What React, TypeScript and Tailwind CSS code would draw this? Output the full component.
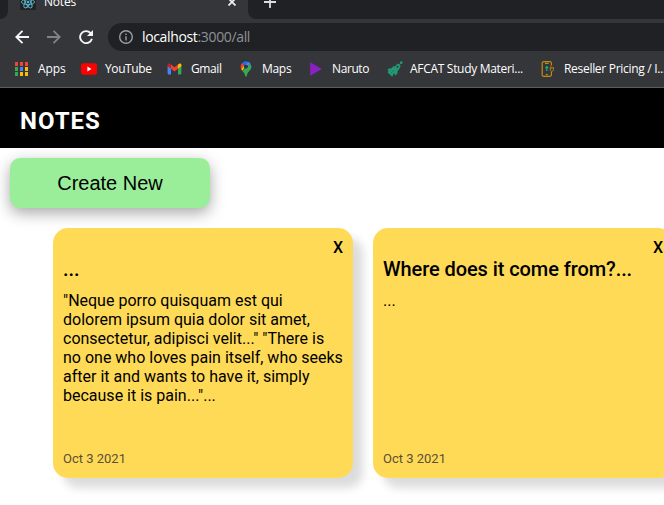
import React from "react";

const UI = "font-['Open_Sans','Noto_Sans',sans-serif]";

function ReactIcon() {
  return (
    <svg width="16" height="16" viewBox="0 0 16 16" fill="none" stroke="#5ab4cd" strokeWidth="0.9">
      <rect width="16" height="16" rx="1.5" fill="#222222" stroke="none" />
      <ellipse cx="8" cy="8" rx="6.6" ry="2.6" />
      <ellipse cx="8" cy="8" rx="6.6" ry="2.6" transform="rotate(60 8 8)" />
      <ellipse cx="8" cy="8" rx="6.6" ry="2.6" transform="rotate(120 8 8)" />
      <circle cx="8" cy="8" r="1.3" fill="#5ab4cd" stroke="none" />
    </svg>
  );
}

function AppsIcon() {
  const colors = ["#f04438", "#f04438", "#f04438", "#34a853", "#4285f4", "#fbbc05", "#34a853", "#fbbc05", "#fbbc05"];
  return (
    <svg width="14" height="14" viewBox="0 0 14 14" shapeRendering="crispEdges">
      {colors.map((c, i) => (
        <rect key={i} x={(i % 3) * 5} y={Math.floor(i / 3) * 5} width="3" height="4" fill={c} />
      ))}
    </svg>
  );
}

function YouTubeIcon() {
  return (
    <svg width="16" height="12" viewBox="0 0 16 12">
      <rect y="0.3" width="16" height="11.4" rx="2.8" fill="#ff0000" />
      <path d="M6.4 3.6v4.8L10.5 6z" fill="#fff" />
    </svg>
  );
}

function GmailIcon() {
  return (
    <svg width="15" height="12" viewBox="0 0 15 12">
      <path d="M0.6 2.5V10.6a.8.8 0 0 0 .8.8H4V4.7z" fill="#4285f4" />
      <path d="M14.4 2.5V10.6a.8.8 0 0 1-.8.8H11V4.7z" fill="#34a853" />
      <path d="M4 1.6 7.5 4.3 11 1.6v4.1L7.5 8.4 4 5.7z" fill="#ea4335" />
      <path d="M.6 2.1C.6.6 2.2.2 3.2 1L4 1.6v4.1L.6 3.2z" fill="#c5221f" />
      <path d="M14.4 2.1c0-1.5-1.6-1.9-2.6-1.1l-.8.6v4.1l3.4-2.5z" fill="#fbbc04" />
    </svg>
  );
}

function MapsIcon() {
  return (
    <svg width="16" height="16" viewBox="0 0 16 16">
      <path d="M8 .3a5.3 5.3 0 0 0-4.1 1.9L6.4 4.4 10 .7A5.3 5.3 0 0 0 8 .3z" fill="#1a73e8" />
      <path d="M3.9 2.2a5.3 5.3 0 0 0-.7 5.7l3.2-3.5z" fill="#ea4335" />
      <path d="M10 .7 6.4 4.5a2 2 0 0 1 3.2 2.3l2.9-4A5.3 5.3 0 0 0 10 .7z" fill="#4285f4" />
      <path d="m6.5 6.9-2.2 2.8A6.3 6.3 0 0 1 3.2 7.9L6 4.6a2 2 0 0 0 .5 2.3z" fill="#fbbc04" />
      <path d="M12.6 3a5.3 5.3 0 0 1 .1 5.2c-1.4 2.4-3.1 2.5-3.9 6.7-.3 1.1-1.3 1.1-1.6 0-.4-2.2-1.4-3.500-2.900-5.200z" fill="#34a853" />
      <circle cx="8" cy="5.6" r="1.9" fill="#35363a" />
    </svg>
  );
}

function PlayIcon() {
  return (
    <svg width="12" height="14" viewBox="0 0 12 14">
      <path d="M.2.2 11.8 7 .2 13.8z" fill="#8a20c4" />
    </svg>
  );
}

function RocketIcon() {
  return (
    <svg width="16" height="16" viewBox="0 0 16 16" fill="#219a72">
      <path d="M11.600 2.600 13.500 4.500c0 2-1.200 3.800-2.900 5.500L10.200 13 7.800 14.600 7.500 12.200 6.200 13 5.800 15.500 3.800 14.800 3 13.200 1.400 12.600.6 10.700 2 10 .400 9 1.700 7.400 4 7.600 6 5.500 8.100 5.300C9.200 4 10.300 3 11.600 2.600z" />
      <path d="m12.500 3.500 1.800-1.700" stroke="#219a72" strokeWidth="1" />
      <circle cx="14.300" cy="1.600" r="1.300" />
      <circle cx="10.500" cy="5.700" r="1" fill="#35363a" />
      <path d="M4 12 7 9" stroke="#237057" strokeWidth="0.800" />
    </svg>
  );
}

function PhoneIcon() {
  return (
    <svg width="14" height="16" viewBox="0 0 14 16" fill="none" stroke="#c18b15" strokeWidth="1.2">
      <path d="M11.400 4.500V2.200A1.500 1.500 0 0 0 9.900.7H3.700a1.500 1.500 0 0 0-1.500 1.500v11.600a1.500 1.500 0 0 0 1.500 1.500h6.200a1.500 1.500 0 0 0 1.500-1.500v-3" />
      <path d="M5 2.300h3.600M5.800 13.600h2" />
      <path d="M10.300 5.500v3.200c0 1 .6 1.600 1.500 1.600s1.600-.6 1.600-1.600V6M11.900 5.500v2.500" strokeWidth="0.9" />
      <path d="M6.800 10V6M5.500 7l1.300-1.300L8.100 7" stroke="#16b364" />
    </svg>
  );
}

const bookmarks = [
  { label: "Apps", icon: <AppsIcon />, box: "w-[67px]", iconBox: "w-[24px] pl-px", text: "tracking-[-0.1px]" },
  { label: "YouTube", icon: <YouTubeIcon />, box: "w-[86px]", iconBox: "w-[24px]", text: "tracking-[-0.4px]" },
  { label: "Gmail", icon: <GmailIcon />, box: "w-[71px]", iconBox: "w-[24px]", text: "tracking-[-0.4px]" },
  { label: "Maps", icon: <MapsIcon />, box: "w-[70px]", iconBox: "w-[24px]", text: "tracking-[-0.3px]" },
  { label: "Naruto", icon: <PlayIcon />, box: "w-[79px]", iconBox: "w-[24px] pl-[2px]", text: "tracking-[-0.4px]" },
  { label: "AFCAT Study Materi...", icon: <RocketIcon />, box: "w-[153px]", iconBox: "w-[23px]", text: "tracking-[-0.3px]" },
  { label: "Reseller Pricing / I...", icon: <PhoneIcon />, box: "w-[140px]", iconBox: "w-[24px]", text: "tracking-[-0.3px]" },
];

function Browser() {
  return (
    <div className={`h-[88px] border-b border-[#5b5c60] bg-[#35363a] font-medium text-white ${UI}`}>
      <div className="flex h-[19px]">
        <div className="w-2 rounded-br-lg bg-[#202124]" />
        <div className="flex h-[19px] w-[240px] overflow-hidden pl-3">
          <div className="-mt-[6px] w-6 shrink-0"><ReactIcon /></div>
          <span className="-mt-[7px] text-[12px] leading-[18px] tracking-[-0.2px]">Notes</span>
          <svg className="mr-[12px] ml-auto -mt-[2px]" width="8" height="8" viewBox="0 0 8 8" stroke="#f1f1f1" strokeWidth="1.7">
            <path d="m.5.5 7 7m0-7-7 7" />
          </svg>
        </div>
        <div className="flex-1 rounded-bl-lg bg-[#202124] pl-4">
          <svg className="-mt-[4px]" width="12" height="12" viewBox="0 0 12 12" stroke="#dcdde0" strokeWidth="1.8">
            <path d="M6 0v12M0 6h12" />
          </svg>
        </div>
      </div>
      <div className="flex h-9 items-center pl-[15px]">
        <svg className="mr-[18px]" width="14" height="14" viewBox="0 0 14 14" fill="none" stroke="#f5f5f6" strokeWidth="1.9">
          <path d="M14 7H1.5M7.5.8 1.3 7l6.200 6.200" />
        </svg>
        <svg className="mr-[18px]" width="14" height="14" viewBox="0 0 14 14" fill="none" stroke="#818286" strokeWidth="1.9">
          <path d="M0 7h12.5M6.5.8 12.7 7l-6.200 6.200" />
        </svg>
        <svg className="mr-[15px]" width="14" height="14" viewBox="0 0 14 14" fill="none" stroke="#f5f5f6" strokeWidth="1.9">
          <path d="M12.9 8.700A6 6 0 1 1 11.500 3l1 1.200" />
          <path d="M14 0v6H8z" fill="#f5f5f6" stroke="none" />
        </svg>
        <div className="flex h-7 flex-1 items-center rounded-l-full bg-[#202124] pl-[11px]">
          <svg className="mr-[9px] shrink-0" width="14" height="14" viewBox="0 0 14 14" fill="none" stroke="#9aa0a6" strokeWidth="1.4">
            <circle cx="7" cy="7" r="6.3" />
            <path d="M7 6.200v4.200M7 3.400v1.600" />
          </svg>
          <span className="text-[14px] leading-5 font-normal tracking-[-0.35px] text-[#8f9398]">
            <span className="text-white">localhost</span>:3000/all
          </span>
        </div>
      </div>
      <div className="flex h-7 items-center overflow-hidden pl-[14px]">
        {bookmarks.map((b) => (
          <div key={b.label} className={`flex shrink-0 items-center ${b.box}`}>
            <span className={`shrink-0 ${b.iconBox}`}>{b.icon}</span>
            <span className={`text-[12px] leading-4 whitespace-nowrap ${b.text}`}>{b.label}</span>
          </div>
        ))}
      </div>
    </div>
  );
}

function Note({ title, body }: { title: string; body: string }) {
  return (
    <article className="flex h-[250px] w-[300px] shrink-0 flex-col rounded-[15px] bg-[#ffda57] p-[10px] shadow-[10px_10px_10px_rgba(0,0,0,0.14)]">
      <button className="h-[19px] self-end text-[16px] leading-[19px] font-medium">X</button>
      <h2 className="h-6 text-[20px] leading-6 font-medium tracking-[-0.08px]">{title}</h2>
      <p className="mt-[10px] text-[16px] leading-[19px]">{body}</p>
      <time className="mt-auto mb-[2px] text-[13px] leading-[15px] text-[#5a4f34]">Oct 3 2021</time>
    </article>
  );
}

export default function App() {
  return (
    <div className="h-[505px] w-[664px] overflow-hidden bg-white font-['Roboto',sans-serif] text-black">
      <Browser />
      <header className="flex h-[60px] items-center bg-black pl-5">
        <h1 className="pt-[6px] text-[24px] leading-7 font-bold tracking-[1px] text-white">NOTES</h1>
      </header>
      <main>
        <button className="mt-[10px] ml-[10px] block h-[50px] w-[200px] rounded-[10px] bg-[#9aee9a] font-['Liberation_Sans',Arial,sans-serif] text-[20px] shadow-[0_5px_15px_rgba(0,0,0,0.35)]">
          Create New
        </button>
        <section className="mt-5 flex gap-5 pl-[53px]">
          <Note
            title="..."
            body={'"Neque porro quisquam est qui dolorem ipsum quia dolor sit amet, consectetur, adipisci velit..." "There is no one who loves pain itself, who seeks after it and wants to have it, simply because it is pain..."...'}
          />
          <Note title="Where does it come from?..." body="..." />
        </section>
      </main>
    </div>
  );
}
